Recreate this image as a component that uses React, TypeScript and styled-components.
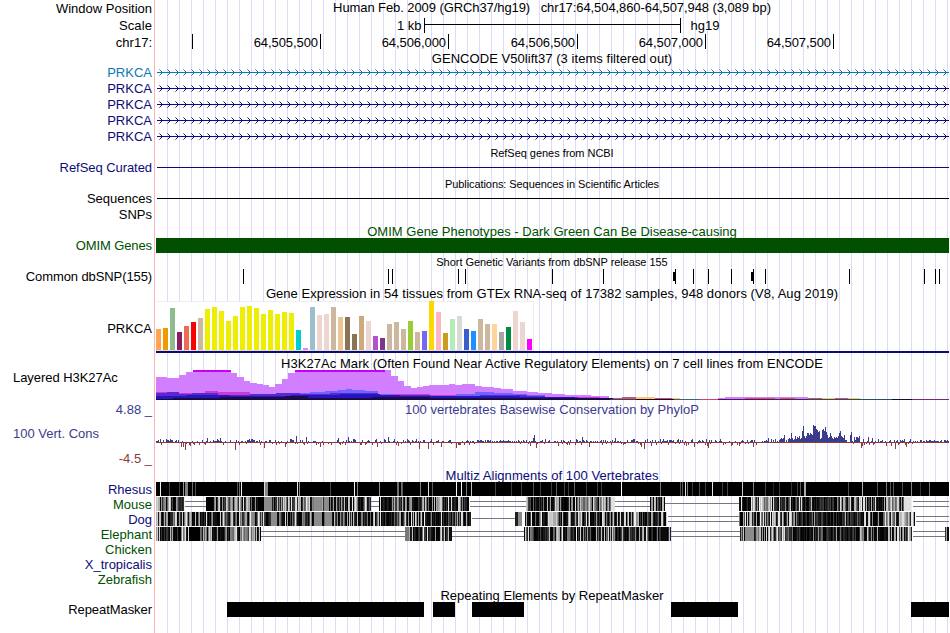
import React from 'react';
import styled, { createGlobalStyle } from 'styled-components';

const GlobalStyle = createGlobalStyle`
  body {
    margin: 0;
    background: #fff;
    overflow: hidden;
  }
`;

const Browser = styled.main`
  width: 949px;
  height: 633px;
  overflow: hidden;
  font-family: 'Liberation Sans', Arial, sans-serif;
  font-size: 13px;
  color: #000;
  background:
    linear-gradient(#ffb4b4, #ffb4b4) 154px 0 / 1px 100% no-repeat,
    repeating-linear-gradient(90deg, transparent 0 11px, #dcdcf8 11px 12px) 156px 0 / 793px 100% no-repeat;
`;

const Row = styled.div<{ $h: number }>`
  display: grid;
  grid-template-columns: 152px 794px;
  column-gap: 3px;
  height: ${(p) => p.$h}px;
`;

const Label = styled.div<{ $color?: string; $h?: number; $left?: boolean; $track?: number }>`
  height: ${(p) => (p.$h ? `${p.$h}px` : '100%')};
  line-height: ${(p) => p.$h || 16}px;
  padding-left: ${(p) => (p.$left ? 13 : 0)}px;
  text-align: ${(p) => (p.$left ? 'left' : 'right')};
  letter-spacing: ${(p) => p.$track || 0}px;
  white-space: pre;
  color: ${(p) => p.$color || '#000'};
`;

const Title = styled.div<{ $color?: string; $small?: boolean; $h: number; $track?: number }>`
  grid-column: 2;
  height: ${(p) => p.$h}px;
  line-height: ${(p) => p.$h}px;
  text-align: center;
  white-space: pre;
  font-size: ${(p) => (p.$small ? 11 : 13)}px;
  letter-spacing: ${(p) => p.$track || 0}px;
  color: ${(p) => p.$color || '#000'};
`;

const Canvas = styled.svg`
  display: block;
  grid-column: 2;
  shape-rendering: crispEdges;
`;

const ScaleBar = styled.div`
  display: flex;
  align-items: center;
  height: 15px;
  padding: 1px 0 0 242px;
  line-height: 15px;
`;

const ScaleLine = styled.div`
  box-sizing: border-box;
  width: 257px;
  height: 15px;
  margin: 0 10px 0 2px;
  border: solid #000;
  border-width: 0 1px;
  background: linear-gradient(#000, #000) 0 6px / 100% 1px no-repeat;
`;

const Ruler = styled.div`
  display: flex;
`;

const RulerStep = styled.div<{ $w: number }>`
  box-sizing: border-box;
  width: ${(p) => p.$w}px;
  height: 15px;
  padding-right: 2px;
  border-right: 1px solid #000;
  line-height: 17px;
  letter-spacing: -0.07px;
  text-align: right;
`;

const ConsLabels = styled.div`
  display: flex;
  flex-direction: column;
  justify-content: space-between;
  padding-top: 8px;
`;

const navy = '#0c0c78';
const blue = '#3c3c8c';
const red = '#8c3c3c';
const green = '#005000';
const END = 949;

const Plot = ({ h, children }: { h: number; children?: React.ReactNode }) => (
  <Canvas width={794} height={h} viewBox={`155 0 794 ${h}`}>
    {children}
  </Canvas>
);

const TitleRow = ({
  h,
  box = h,
  text,
  color,
  small,
  track,
}: {
  h: number;
  box?: number;
  text: string;
  color?: string;
  small?: boolean;
  track?: number;
}) => (
  <Row $h={h}>
    <Title $h={box} $color={color} $small={small} $track={track}>
      {text}
    </Title>
  </Row>
);

const random = (seed: number) => {
  let s = seed;
  return () => {
    s = (s * 16807) % 2147483647;
    return s / 2147483647;
  };
};

// Transcripts
const transcripts = ['#0c78b4', navy, navy, navy, navy];

const dot = (x: number, y: number) => `M${x} ${y}h1v1h-1z`;

const Transcript = ({ color }: { color: string }) => {
  let heads = '';
  let tails = '';
  for (let x = 159; x < END; x += 8) {
    tails += dot(x, 5) + dot(x, 11);
    heads += dot(x + 1, 6) + dot(x + 1, 10) + dot(x + 2, 7) + dot(x + 2, 9) + dot(x + 3, 8);
  }
  return (
    <Plot h={16}>
      <rect x={157} y={8} width={792} height={1} fill={color} />
      <path d={heads} fill={color} />
      <path d={tails} fill={color} opacity={0.55} />
    </Plot>
  );
};

const snps = [243, 388, 392, 458, 465, 552, 603, 675, 693, 708, 731, 753, 765, 849, 924, 935, 939];
const insertions = [673, 751];

// Tissue colour and bar height
const tissues: [string, number][] = [
  ['#ffa54f', 21], ['#ee9a00', 22], ['#8fbc8f', 42], ['#8b1c62', 18], ['#ee6a50', 24], ['#ff0000', 28],
  ['#cdb79e', 32], ['#eeee00', 41], ['#eeee00', 43], ['#eeee00', 39], ['#eeee00', 29], ['#eeee00', 34],
  ['#eeee00', 43], ['#eeee00', 44], ['#eeee00', 42], ['#eeee00', 36], ['#eeee00', 40], ['#eeee00', 36],
  ['#eeee00', 38], ['#eeee00', 37], ['#00cdcd', 20], ['#ee82ee', 2], ['#9ac0cd', 43], ['#eed5d2', 35],
  ['#eed5d2', 36], ['#cdb79e', 43], ['#eec591', 33], ['#8b7355', 33], ['#8b7355', 16], ['#cdaa7d', 34],
  ['#eed5d2', 29], ['#b452cd', 14], ['#7a378b', 12], ['#cdb79e', 26], ['#cdb79e', 28], ['#cdb79e', 21],
  ['#9acd32', 29], ['#cdb79e', 18], ['#7a67ee', 19], ['#ffd700', 49], ['#ffb6c1', 38], ['#cd9b1d', 17],
  ['#b4eeb4', 31], ['#d9d9d9', 34], ['#3a5fcd', 21], ['#1e90ff', 19], ['#cdb79e', 31], ['#cdb79e', 26],
  ['#ffd39b', 26], ['#a6a6a6', 18], ['#008b45', 23], ['#eed5d2', 39], ['#eed5d2', 28], ['#ff00ff', 11],
];

// Stacked cell line signals: every step is [x, height]
const signals: { color: string; steps: number[][] }[] = [
  {
    color: '#d17fff',
    steps: [
      [156, 22], [167, 21], [179, 24], [186, 27], [193, 29], [231, 26], [237, 22], [244, 18], [250, 16],
      [257, 15], [263, 14], [269, 12], [275, 15], [282, 20], [288, 26], [295, 29], [391, 23], [398, 18],
      [404, 13], [411, 11], [417, 12], [423, 13], [429, 14], [449, 15], [455, 14], [462, 15], [475, 13],
      [482, 12], [494, 11], [501, 10], [513, 8], [527, 7], [538, 6], [552, 5], [565, 4], [591, 3], [609, 1],
      [612, 0], [718, 1], [725, 2], [808, 1], [822, 0],
    ],
  },
  { color: '#c83cd2', steps: [[156, 7], [179, 6], [205, 8], [218, 7], [250, 5], [270, 0], [390, 5], [430, 4], [545, 2], [600, 0]] },
  {
    color: '#6e64ff',
    steps: [[270, 5], [284, 6], [310, 7], [325, 8], [338, 9], [346, 10], [352, 9], [365, 8], [378, 5], [392, 3], [456, 5], [475, 7], [494, 6], [513, 5], [527, 4], [545, 2], [552, 0]],
  },
  { color: '#5a28d2', steps: [[156, 6], [167, 7], [179, 5], [192, 6], [218, 4], [250, 5], [276, 6], [300, 5], [330, 6], [378, 4], [430, 3], [480, 4], [527, 3], [545, 2], [578, 0]] },
  { color: '#2814be', steps: [[156, 3], [187, 4], [230, 3], [290, 4], [340, 5], [380, 4], [400, 3], [495, 3], [520, 2], [575, 1], [610, 0]] },
  { color: '#1c0a50', steps: [[173, 1], [220, 2], [285, 3], [308, 1], [372, 2], [430, 1], [600, 1], [675, 0]] },
  { color: '#d2506e', steps: [[613, 1], [622, 2], [640, 1], [674, 0], [745, 1], [775, 0], [780, 1], [795, 0], [808, 1], [822, 0], [835, 1], [848, 0]] },
  { color: '#ffc864', steps: [[636, 2], [655, 0], [672, 1], [680, 0], [822, 1], [835, 0], [848, 1], [860, 0]] },
];

const floorColors: [number, string][] = [
  [156, '#140a3c'], [610, '#285064'], [636, '#140a3c'], [674, '#3c6478'], [700, '#dc3c6e'], [718, '#501464'],
  [770, '#3c2850'], [808, '#285064'], [892, '#140a3c'], [912, '#782878'],
];

const stepPath = (steps: number[][], base: number) => {
  let d = `M${steps[0][0]} ${base}`;
  steps.forEach(([x, h]) => {
    d += `H${x}V${base - h}`;
  });
  return `${d}V${base}z`;
};

// Conservation peaks on top of the background noise
const peaks: Record<number, number> = {
  181: -5, 183: -5, 185: -8, 190: -4, 207: 4, 220: 4, 235: -8, 264: -6, 285: -5, 296: 6, 306: 5, 320: -5,
  338: 4, 348: 5, 377: -5, 388: 5, 398: -4, 419: -7, 428: -7, 441: -5, 456: -6, 469: -3, 530: -4, 533: 4, 534: 7,
  536: -6, 544: -2, 558: -4, 582: 5, 589: -5, 615: 4, 641: -5, 644: -7, 651: -4, 686: -4, 694: -5, 707: -4, 708: -6,
  720: 3, 731: -4, 739: -4, 753: -5, 768: 4, 780: 3, 781: 4, 782: 3, 783: 4, 784: 7, 786: 2, 788: 3, 789: 4, 790: 3,
  791: 9, 792: 4, 793: 2, 794: 3, 795: 6, 796: 3, 797: 5, 798: 4, 799: 6, 800: 3, 801: 4, 802: 11, 803: 16, 804: 6, 805: 4,
  806: 6, 807: 9, 808: 9, 809: 7, 810: 9, 811: 8, 812: 7, 813: 17, 814: 16, 815: 16, 816: 13, 817: 12, 818: 10,
  819: 11, 820: 3, 821: 4, 822: 12, 823: 13, 824: 11, 825: 15, 826: 10, 827: 7, 828: 4, 829: 5, 830: 9, 831: 6,
  832: 4, 833: 3, 834: 5, 835: 4, 836: 5, 837: 4, 838: 6, 839: 9, 840: 11, 841: 6, 842: 5, 843: 4, 844: 7, 845: 2,
  850: 7, 851: 10, 854: 5, 855: 2, 856: 5, 857: 5, 858: 4, 859: 6, 861: -6, 862: -4, 868: 5, 872: 4, 886: -4, 891: -4,
  895: -7, 898: -3, 906: -5,
};

const Conservation = () => {
  const next = random(77);
  let up = '';
  let down = '';
  for (let x = 156; x < END; x += 1) {
    const r = next();
    const size = next();
    let v = peaks[x];
    if (v === undefined) {
      const quiet = x > 912 || (x > 478 && x < 515);
      if (quiet) v = r < 0.8 ? 1 + Math.round(size * 0.7) : -1;
      else if (r < 0.42) v = size < 0.5 ? 1 : size < 0.88 ? 2 : 3;
      else v = size < 0.68 ? -1 : size < 0.85 ? -2 : -3;
    }
    if (v > 0) up += `M${x} ${25 - v}h1v${v}h-1z`;
    else down += `M${x} 25h1v${-v}h-1z`;
  }
  return (
    <Plot h={50}>
      <rect x={156} y={25} width={793} height={1} fill={red} />
      <path d={up} fill={blue} />
      <path d={down} fill={red} />
    </Plot>
  );
};

interface Species {
  name: string;
  color: string;
  // [start, end, brightness], brightness 0 to 9
  blocks?: number[][];
  // [start, end, number of lines]
  gaps?: number[][];
  // [start, width, grey level]
  marks?: number[][];
}

const species: Species[] = [
  {
    name: 'Rhesus',
    color: navy,
    blocks: [[156, 949, 0]],
    marks: [
      [160, 1, 240], [169, 1, 70], [179, 1, 60], [183, 1, 150], [185, 3, 130], [192, 1, 110], [195, 1, 80],
      [237, 1, 80], [239, 1, 110], [241, 1, 240], [264, 1, 220], [265, 3, 136], [297, 1, 230], [299, 1, 140],
      [330, 1, 70], [354, 1, 240], [357, 1, 130], [379, 1, 140], [397, 2, 110], [402, 1, 90], [401, 1, 110],
      [420, 1, 130], [428, 1, 220], [432, 1, 90], [456, 1, 245], [461, 1, 245], [466, 1, 120], [471, 1, 190],
      [495, 1, 70], [511, 1, 60], [521, 1, 60], [533, 1, 80], [540, 1, 60], [551, 1, 60], [556, 1, 90],
      [564, 1, 70], [568, 1, 60], [574, 1, 100], [586, 1, 60], [597, 1, 60], [601, 1, 60], [621, 1, 255],
      [660, 1, 120], [680, 1, 80], [682, 1, 90], [685, 1, 220], [687, 1, 130], [692, 1, 60], [699, 1, 80],
      [705, 1, 60], [712, 1, 230], [722, 1, 60], [727, 1, 70], [742, 1, 200], [753, 1, 130], [765, 1, 70],
      [773, 1, 40], [779, 1, 60], [791, 1, 50], [797, 1, 60], [800, 1, 90], [804, 2, 170], [848, 1, 80],
      [862, 1, 180], [877, 1, 80], [886, 1, 120], [890, 1, 80], [893, 1, 90], [902, 1, 80], [911, 1, 130],
      [920, 1, 50], [929, 1, 110],
    ],
  },
  {
    name: 'Mouse',
    color: green,
    blocks: [
      [156, 173, 6], [173, 185, 2], [206, 213, 0], [213, 226, 3], [226, 250, 6], [250, 258, 2], [258, 264, 0],
      [264, 272, 3], [272, 284, 2], [284, 304, 4], [304, 314, 6], [314, 334, 3], [334, 350, 3], [350, 371, 5],
      [379, 400, 3], [400, 420, 2], [420, 440, 4], [440, 460, 5], [460, 469, 2], [526, 542, 2], [542, 560, 3],
      [560, 580, 3], [580, 611, 6], [650, 655, 5], [655, 662, 3], [662, 665, 4], [739, 752, 2], [752, 775, 6],
      [775, 800, 2], [800, 840, 1], [840, 862, 4], [862, 885, 3], [885, 902, 7], [902, 912, 3],
    ],
    marks: [[264, 8, 140], [314, 8, 140], [324, 5, 140], [611, 4, 225], [904, 7, 225]],
    gaps: [[185, 206, 2], [371, 379, 2], [470, 526, 2], [615, 650, 2], [665, 739, 1], [913, 949, 2]],
  },
  {
    name: 'Dog',
    color: navy,
    blocks: [
      [156, 176, 3], [176, 195, 5], [195, 206, 2], [206, 240, 3], [240, 262, 5], [262, 290, 2], [290, 312, 3],
      [312, 330, 1], [330, 362, 3], [362, 400, 3], [400, 430, 3], [430, 455, 1], [455, 471, 3], [525, 548, 2],
      [548, 560, 7], [560, 600, 3], [600, 625, 4], [625, 645, 4], [645, 667, 3], [739, 752, 4], [752, 775, 3],
      [775, 800, 3], [800, 850, 1], [850, 885, 2], [885, 904, 6], [904, 915, 4],
    ],
    marks: [[271, 6, 140], [314, 8, 140], [325, 7, 140], [515, 3, 30], [518, 4, 140], [549, 3, 200], [553, 3, 170]],
    gaps: [[472, 515, 1], [668, 739, 2], [916, 949, 2]],
  },
  {
    name: 'Elephant',
    color: green,
    blocks: [
      [156, 180, 2], [180, 189, 4], [189, 200, 0], [200, 214, 4], [214, 228, 1], [228, 255, 7], [255, 261, 3],
      [405, 409, 4], [409, 430, 2], [430, 452, 2], [524, 545, 2], [545, 570, 3], [570, 600, 2], [600, 630, 3],
      [630, 671, 1], [740, 757, 3], [757, 790, 4], [790, 815, 1], [815, 860, 1], [860, 880, 4], [880, 900, 3],
      [900, 912, 5], [945, 949, 1],
    ],
    marks: [[405, 4, 120], [745, 9, 140], [567, 3, 120], [662, 5, 10]],
    gaps: [[261, 405, 2], [452, 524, 2], [671, 740, 2], [913, 945, 2]],
  },
  { name: 'Chicken', color: green },
  { name: 'X_tropicalis', color: navy },
  { name: 'Zebrafish', color: green },
];

const Alignment = ({ item, seed }: { item: Species; seed: number }) => {
  const next = random(seed);
  const columns: [number, number][] = [];
  item.blocks?.forEach(([start, end, tone]) => {
    for (let x = start; x < end; x += 1) {
      const r = next();
      const g = next();
      const grey = r < tone * 0.12 ? 90 + Math.round(g * 150) : Math.round(g * g * 70);
      columns.push([x, tone ? grey : 0]);
    }
  });
  return (
    <Plot h={14}>
      {item.gaps?.map(([start, end, lines]) =>
        (lines === 1 ? [6] : [4, 9]).map((y) => (
          <rect key={`${start}-${y}`} x={start} y={y} width={end - start} height={1} fill="#777" />
        ))
      )}
      {columns.map(([x, g]) => (
        <rect key={x} x={x} y={0} width={1} height={14} fill={`rgb(${g},${g},${g})`} />
      ))}
      {item.marks?.map(([x, w, g]) => (
        <rect key={x} x={x} y={0} width={w} height={14} fill={`rgb(${g},${g},${g})`} />
      ))}
    </Plot>
  );
};

const repeats = [[227, 424], [433, 455], [472, 524], [671, 738], [911, 949]];

const App = () => (
  <>
    <GlobalStyle />
    <Browser>
      <Row $h={17}>
        <Label $h={18}>Window Position</Label>
        <Title $h={16} $track={-0.085}>
          {'Human Feb. 2009 (GRCh37/hg19)   chr17:64,504,860-64,507,948 (3,089 bp)'}
        </Title>
      </Row>
      <Row $h={17}>
        <Label $h={18} $track={0.1}>
          Scale
        </Label>
        <ScaleBar>
          1 kb
          <ScaleLine />
          hg19
        </ScaleBar>
      </Row>
      <Row $h={16}>
        <Label $h={18}>chr17:</Label>
        <Ruler>
          <RulerStep $w={38} />
          <RulerStep $w={128}>64,505,500</RulerStep>
          <RulerStep $w={128}>64,506,000</RulerStep>
          <RulerStep $w={129}>64,506,500</RulerStep>
          <RulerStep $w={128}>64,507,000</RulerStep>
          <RulerStep $w={128}>64,507,500</RulerStep>
        </Ruler>
      </Row>
      <TitleRow h={14} box={18} track={0.05} text="GENCODE V50lift37 (3 items filtered out)" />
      {transcripts.map((color, idx) => (
        <Row key={idx} $h={16}>
          <Label $h={18} $color={color}>
            PRKCA
          </Label>
          <Transcript color={color} />
        </Row>
      ))}
      <TitleRow h={16} box={18} small track={-0.04} text="RefSeq genes from NCBI" />
      <Row $h={15}>
        <Label $color={navy} $track={-0.06}>
          RefSeq Curated
        </Label>
        <Plot h={15}>
          <rect x={157} y={7} width={792} height={1} fill={navy} />
        </Plot>
      </Row>
      <TitleRow h={16} box={18} small track={-0.08} text="Publications: Sequences in Scientific Articles" />
      <Row $h={16}>
        <Label>Sequences</Label>
        <Plot h={16}>
          <rect x={157} y={7} width={792} height={1} fill="#000" />
        </Plot>
      </Row>
      <Row $h={15}>
        <Label>SNPs</Label>
      </Row>
      <TitleRow
        h={16}
        box={20}
        color={green}
        track={0.02}
        text="OMIM Gene Phenotypes - Dark Green Can Be Disease-causing"
      />
      <Row $h={15}>
        <Label $color={green} $track={-0.1}>
          OMIM Genes
        </Label>
        <Plot h={15}>
          <rect x={156} y={0} width={793} height={15} fill={green} />
        </Plot>
      </Row>
      <TitleRow h={16} box={18} small track={-0.04} text="Short Genetic Variants from dbSNP release 155" />
      <Row $h={15}>
        <Label $track={-0.1}>Common dbSNP(155)</Label>
        <Plot h={15}>
          {snps.map((x) => (
            <rect key={x} x={x} y={0} width={1} height={15} />
          ))}
          {insertions.map((x) => (
            <rect key={x} x={x} y={3} width={3} height={9} />
          ))}
        </Plot>
      </Row>
      <TitleRow
        h={16}
        box={20}
        track={0.055}
        text="Gene Expression in 54 tissues from GTEx RNA-seq of 17382 samples, 948 donors (V8, Aug 2019)"
      />
      <Row $h={53}>
        <Label $h={57}>PRKCA</Label>
        <Plot h={53}>
          <rect x={156} y={1} width={378} height={50} fill="#eee" />
          <rect x={156} y={2} width={377} height={48} fill="#fff" />
          <rect x={156} y={50} width={378} height={1} fill="#ddd" />
          {tissues.map(([color, h], idx) => (
            <rect key={idx} x={156 + idx * 7} y={50 - h} width={5} height={h} fill={color} />
          ))}
          <rect x={156} y={51} width={793} height={2} fill={navy} />
        </Plot>
      </Row>
      <TitleRow
        h={17}
        box={21}
        track={0.05}
        text="H3K27Ac Mark (Often Found Near Active Regulatory Elements) on 7 cell lines from ENCODE"
      />
      <Row $h={30}>
        <Label $left $track={-0.05}>
          Layered H3K27Ac
        </Label>
        <Plot h={30}>
          {signals.map(({ color, steps }) => (
            <path key={color} d={stepPath(steps, 29)} fill={color} />
          ))}
          <rect x={193} y={0} width={38} height={2} fill="#c800f0" />
          <rect x={295} y={0} width={90} height={2} fill="#c800f0" />
          {floorColors.map(([x, color]) => (
            <rect key={x} x={x} y={29} width={END - x} height={1} fill={color} />
          ))}
        </Plot>
      </Row>
      <Row $h={17}>
        <Label $color={blue} $h={19}>
          4.88 _
        </Label>
        <Title $h={20} $color={blue} $track={0.045}>
          100 vertebrates Basewise Conservation by PhyloP
        </Title>
      </Row>
      <Row $h={50}>
        <ConsLabels>
          <Label $color={blue} $h={18} $left>
            100 Vert. Cons
          </Label>
          <Label $color={red} $h={16}>
            -4.5 _
          </Label>
        </ConsLabels>
        <Conservation />
      </Row>
      <TitleRow h={15} box={18} color={navy} track={0.055} text="Multiz Alignments of 100 Vertebrates" />
      {species.map((item, idx) => (
        <Row key={item.name} $h={15}>
          <Label $color={item.color}>{item.name}</Label>
          {item.blocks && <Alignment item={item} seed={911 + idx * 37} />}
        </Row>
      ))}
      <TitleRow h={15} box={18} track={0.02} text="Repeating Elements by RepeatMasker" />
      <Row $h={31}>
        <Label $h={16} $track={-0.06}>
          RepeatMasker
        </Label>
        <Plot h={15}>
          {repeats.map(([start, end]) => (
            <rect key={start} x={start} y={0} width={end - start} height={15} />
          ))}
        </Plot>
      </Row>
    </Browser>
  </>
);

export default App;
